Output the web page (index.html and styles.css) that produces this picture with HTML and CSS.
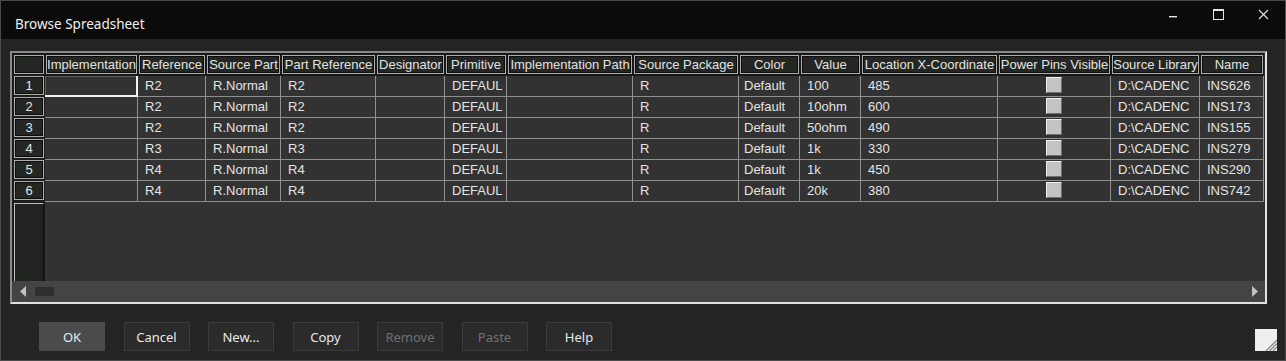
FILE: index.html
```html
<!DOCTYPE html>
<html>
<head>
<meta charset="utf-8">
<title>Browse Spreadsheet</title>
<link rel="stylesheet" href="styles.css">
</head>
<body>
<div class="window">
  <div class="titlebar">
    <span class="title">Browse Spreadsheet</span>
    <div class="caps">
      <span class="cap"><svg width="12" height="13" viewBox="0 0 12 13"><rect x="2" y="7" width="8" height="1.4" fill="#e6e6e6"/></svg></span>
      <span class="cap"><svg width="12" height="13" viewBox="0 0 12 13"><rect x="1.5" y="0.5" width="10" height="10" fill="none" stroke="#e6e6e6" stroke-width="1"/><line x1="1.5" y1="1.5" x2="11.5" y2="1.5" stroke="#e6e6e6" stroke-width="1"/></svg></span>
      <span class="cap"><svg width="12" height="13" viewBox="0 0 12 13"><path d="M2 1 L11 10 M11 1 L2 10" stroke="#e6e6e6" stroke-width="1.1" fill="none"/></svg></span>
    </div>
  </div>
  <div class="content">
    <div class="grid">
      <div class="sheet">
        <div class="hc corner"><div class="hbox"></div></div>
        <div class="hc"><div class="hbox">Implementation</div></div>
        <div class="hc"><div class="hbox">Reference</div></div>
        <div class="hc"><div class="hbox">Source Part</div></div>
        <div class="hc"><div class="hbox">Part Reference</div></div>
        <div class="hc"><div class="hbox">Designator</div></div>
        <div class="hc"><div class="hbox">Primitive</div></div>
        <div class="hc"><div class="hbox">Implementation Path</div></div>
        <div class="hc"><div class="hbox">Source Package</div></div>
        <div class="hc"><div class="hbox">Color</div></div>
        <div class="hc"><div class="hbox">Value</div></div>
        <div class="hc"><div class="hbox">Location X-Coordinate</div></div>
        <div class="hc"><div class="hbox">Power Pins Visible</div></div>
        <div class="hc"><div class="hbox">Source Library</div></div>
        <div class="hc"><div class="hbox">Name</div></div>

        <div class="rh"><div class="hbox">1</div></div>
        <div class="d focus"></div><div class="d">R2</div><div class="d">R.Normal</div><div class="d">R2</div><div class="d"></div><div class="d">DEFAUL</div><div class="d"></div><div class="d">R</div><div class="d col">Default</div><div class="d">100</div><div class="d">485</div><div class="d chkcell"><span class="chk"></span></div><div class="d">D:\CADENC</div><div class="d">INS626</div>

        <div class="rh"><div class="hbox">2</div></div>
        <div class="d"></div><div class="d">R2</div><div class="d">R.Normal</div><div class="d">R2</div><div class="d"></div><div class="d">DEFAUL</div><div class="d"></div><div class="d">R</div><div class="d col">Default</div><div class="d">10ohm</div><div class="d">600</div><div class="d chkcell"><span class="chk"></span></div><div class="d">D:\CADENC</div><div class="d">INS173</div>

        <div class="rh"><div class="hbox">3</div></div>
        <div class="d"></div><div class="d">R2</div><div class="d">R.Normal</div><div class="d">R2</div><div class="d"></div><div class="d">DEFAUL</div><div class="d"></div><div class="d">R</div><div class="d col">Default</div><div class="d">50ohm</div><div class="d">490</div><div class="d chkcell"><span class="chk"></span></div><div class="d">D:\CADENC</div><div class="d">INS155</div>

        <div class="rh"><div class="hbox">4</div></div>
        <div class="d"></div><div class="d">R3</div><div class="d">R.Normal</div><div class="d">R3</div><div class="d"></div><div class="d">DEFAUL</div><div class="d"></div><div class="d">R</div><div class="d col">Default</div><div class="d">1k</div><div class="d">330</div><div class="d chkcell"><span class="chk"></span></div><div class="d">D:\CADENC</div><div class="d">INS279</div>

        <div class="rh"><div class="hbox">5</div></div>
        <div class="d"></div><div class="d">R4</div><div class="d">R.Normal</div><div class="d">R4</div><div class="d"></div><div class="d">DEFAUL</div><div class="d"></div><div class="d">R</div><div class="d col">Default</div><div class="d">1k</div><div class="d">450</div><div class="d chkcell"><span class="chk"></span></div><div class="d">D:\CADENC</div><div class="d">INS290</div>

        <div class="rh"><div class="hbox">6</div></div>
        <div class="d"></div><div class="d">R4</div><div class="d">R.Normal</div><div class="d">R4</div><div class="d"></div><div class="d">DEFAUL</div><div class="d"></div><div class="d">R</div><div class="d col">Default</div><div class="d">20k</div><div class="d">380</div><div class="d chkcell"><span class="chk"></span></div><div class="d">D:\CADENC</div><div class="d">INS742</div>

        <div class="rh tall"><div class="tallbox"></div></div>
        <div class="empty"></div>
      </div>
      <div class="hscroll">
        <svg class="arrow" width="6" height="11" viewBox="0 0 6 11"><polygon points="6,0 0,5.5 6,11" fill="#c2c2c2"/></svg>
        <span class="thumb"></span>
        <svg class="arrow right" width="6" height="11" viewBox="0 0 6 11"><polygon points="0,0 6,5.5 0,11" fill="#c2c2c2"/></svg>
      </div>
    </div>
    <div class="footer">
      <span class="btn default">OK</span>
      <span class="btn">Cancel</span>
      <span class="btn">New...</span>
      <span class="btn">Copy</span>
      <span class="btn disabled">Remove</span>
      <span class="btn disabled">Paste</span>
      <span class="btn">Help</span>
      <svg class="grip" width="22" height="22" viewBox="0 0 22 22">
        <rect x="0" y="0" width="22" height="22" fill="#efefef"/>
        <path d="M22 11 L11 22 M22 14.5 L14.5 22 M22 18 L18 22" stroke="#8a8a8a" stroke-width="1.3"/>
      </svg>
    </div>
  </div>
</div>
</body>
</html>
```

FILE: styles.css
```css
* { box-sizing: border-box; }
html, body { margin: 0; padding: 0; background: #242424; }
body { font-family: "Liberation Sans", Arial, sans-serif; }

.window {
  width: 1286px;
  height: 361px;
  border: 1px solid #4a4a4a;
  background: #242424;
  display: flex;
  flex-direction: column;
  overflow: hidden;
}

.titlebar {
  flex: none;
  height: 38px;
  background: #0b0b0b;
  display: flex;
  align-items: flex-start;
}
.title {
  font-family: "Noto Sans", sans-serif;
  font-size: 13.5px;
  line-height: 18px;
  color: #f0f0f0;
  margin: 14px 0 0 14px;
}
.caps { margin-left: auto; display: flex; padding-top: 8px; }
.cap { width: 45px; height: 22px; display: flex; justify-content: center; align-items: flex-start; }

.content {
  flex: 1;
  padding: 12px 18px 0 9px;
  display: flex;
  flex-direction: column;
}

.grid {
  width: 1257px;
  height: 253px;
  border: 2px solid;
  border-color: #8a8a8a #e2e2e2 #e2e2e2 #8a8a8a;
  background: #2e2e2e;
  display: flex;
  flex-direction: column;
}

.sheet {
  display: grid;
  grid-template-columns: 33px 93px 68px 75px 95px 69px 62px 126px 106px 61px 61px 137px 113px 89px 64px;
  grid-template-rows: 23px repeat(6, 21px) 79px;
  width: 1252px;
  background: #323232;
  font-size: 13px;
}

.hc { background: #181818; padding: 2px 1px; }
.hc.corner { padding-left: 2px; }
.hbox {
  height: 19px;
  border: 1px solid #adadad;
  box-shadow: inset 0 0 0 1px #0e0e0e;
  background: #232623;
  color: #e2e2e2;
  line-height: 17px;
  text-align: center;
  white-space: nowrap;
  overflow: hidden;
}

.rh { background: #1c1c1c; padding: 0 1px 2px 2px; }
.rh.tall { padding: 1px 1px 0 2px; }
.tallbox {
  height: 78px;
  border-top: 1px solid #bdbdbd;
  border-left: 1px solid #bdbdbd;
  border-right: 1px solid #0a0a0a;
  background: #202320;
}

.d {
  border-right: 1px solid #8f8f8f;
  border-bottom: 1px solid #8f8f8f;
  padding-left: 7px;
  line-height: 20px;
  color: #e4e4e4;
  white-space: nowrap;
  overflow: hidden;
}
.d.col { padding-left: 5px; }
.d.focus {
  border-right: 2px solid #f2f2f2;
  border-bottom: 2px solid #f2f2f2;
  box-shadow: inset 1px 1px 0 #5e5e5e;
}
.d.chkcell { padding-left: 0; display: flex; justify-content: center; align-items: flex-start; }
.chk {
  display: block;
  width: 16px;
  height: 16px;
  margin-top: 1px;
  background: #c3c3c3;
  border: 1px solid;
  border-color: #efefef #6e6e6e #6e6e6e #efefef;
}

.empty { grid-column: 2 / -1; background: #323232; }

.hscroll {
  height: 21px;
  background: #444444;
  display: flex;
  align-items: center;
  padding: 0 7px 0 8px;
}
.thumb { width: 19px; height: 9px; background: #2f2f2f; margin-left: 9px; }
.arrow.right { margin-left: auto; }

.footer {
  display: flex;
  align-items: flex-start;
  margin-top: 18px;
  padding-left: 29px;
  gap: 18.5px;
}
.btn {
  width: 66px;
  height: 29px;
  border: 1px solid #3b3b3b;
  background: #2b2b2b;
  color: #e8e8e8;
  font-family: "Noto Sans", sans-serif;
  font-size: 13px;
  display: flex;
  align-items: center;
  justify-content: center;
}
.btn.default { background: #4b4b4b; border-color: #4b4b4b; }
.btn.disabled { color: #6f6f6f; }
.grip { margin-left: auto; margin-right: -10px; margin-top: 7px; flex: none; }
```
